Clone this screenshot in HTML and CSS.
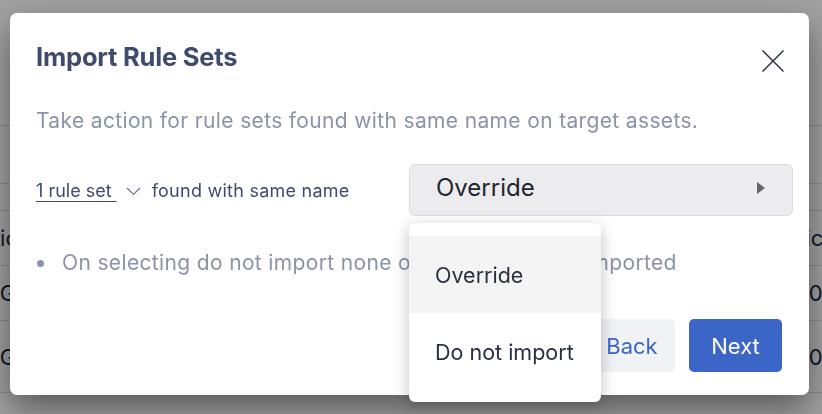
FILE: index.html
```html
<!DOCTYPE html>
<html>
<head>
<meta charset="utf-8">
<link rel="stylesheet" href="styles.css">
</head>
<body>
<div class="page">
  <div class="bg-row h1"></div>
  <div class="bg-row h2"></div>
  <div class="bg-row h4"><span class="l logic">Logic</span><span class="r shift">Policies</span></div>
  <div class="bg-row h4"><span class="l qg">QG</span><span class="r">100</span></div>
  <div class="bg-row h5"><span class="l qg">QG</span><span class="r">100</span></div>
</div>
<div class="overlay"></div>
<div class="modal">
  <div class="header">
    <h1 class="title">Import Rule Sets</h1>
    <svg class="close" width="24" height="24" viewBox="0 0 24 24"><path d="M1.5 1.5 L22.5 22.5 M22.5 1.5 L1.5 22.5" stroke="#2b3146" stroke-width="1.5" fill="none"/></svg>
  </div>
  <p class="subtitle">Take action for rule sets found with same name on target assets.</p>
  <div class="row">
    <div class="label">
      <span class="link">1 rule set </span>
      <svg class="chev" width="15" height="9" viewBox="0 0 15 9"><path d="M1 1 L7.5 7.5 L14 1" stroke="#6b7590" stroke-width="1.2" fill="none"/></svg>
      <span>found with same name</span>
    </div>
    <div class="select-wrap">
      <div class="select">
        <span>Override</span>
        <svg width="10" height="14" viewBox="0 0 10 14"><path d="M1 1 L9 7 L1 13 Z" fill="#666"/></svg>
      </div>
      <ul class="menu">
        <li class="active">Override</li>
        <li>Do not import</li>
      </ul>
    </div>
  </div>
  <ul class="notes">
    <li>On selecting do not import none of the sets will be imported</li>
  </ul>
  <div class="footer">
    <button class="btn back">Back</button>
    <button class="btn next">Next</button>
  </div>
</div>
</body>
</html>
```
FILE: styles.css
```css
html, body {
  margin: 0;
  padding: 0;
  width: 822px;
  height: 414px;
  overflow: hidden;
  font-family: "Inter", "Liberation Sans", sans-serif;
  background: #fff;
}
.page {
  padding-top: 125px;
  overflow: hidden;
}
.bg-row {
  border-top: 1px solid #d8dae0;
  display: grid;
  grid-template-columns: 786px 1fr;
  align-items: center;
  color: #1e2440;
  font-size: 22px;
  box-sizing: border-box;
  white-space: nowrap;
}
.logic { margin-left: -39px; }
.qg { margin-left: -17px; }
.shift { margin-left: -13px; }
.h1 { height: 58px; }
.h2 { height: 27px; }
.h4 { height: 55px; }
.h5 { height: 73px; border-bottom: 1px solid #d8dae0; }
.overlay {
  position: fixed;
  inset: 0;
  background: rgba(0, 0, 0, 0.37);
}
.modal {
  position: fixed;
  left: 10px;
  top: 13px;
  width: 799px;
  height: 382px;
  box-sizing: border-box;
  background: #fff;
  border-radius: 7px;
  padding: 29px 26px 0 26px;
  box-shadow: 0 14px 34px rgba(0, 0, 0, 0.45);
  display: flex;
  flex-direction: column;
}
.header {
  display: flex;
  justify-content: space-between;
  align-items: center;
  height: 30px;
}
.title {
  margin: 0;
  font-size: 25.5px;
  line-height: 30px;
  font-weight: 700;
  color: #3f4a6c;
  letter-spacing: -0.2px;
}
.close {
  margin-right: -2px;
  margin-top: 8px;
}
.subtitle {
  margin: 35px 0 0 0;
  font-size: 21px;
  line-height: 28px;
  color: #8b93aa;
  letter-spacing: 0.35px;
}
.row {
  margin-top: 29px;
  display: flex;
  align-items: center;
  justify-content: space-between;
}
.label {
  display: flex;
  align-items: center;
  font-size: 18px;
  color: #3f4a6c;
  letter-spacing: 0.25px;
}
.link {
  text-decoration: underline;
  text-underline-offset: 4px;
  text-decoration-thickness: 1px;
  white-space: pre;
  letter-spacing: 0;
}
.chev { margin: 3px 11px 0 9px; }
.select-wrap {
  position: relative;
  width: 384px;
  margin-right: -10px;
}
.select {
  height: 52px;
  box-sizing: border-box;
  background: #ececef;
  border: 1px solid #dcdde2;
  border-radius: 6px;
  display: flex;
  align-items: center;
  justify-content: space-between;
  padding: 0 26px 5px 26px;
  font-size: 24px;
  color: #222530;
}
.menu {
  position: absolute;
  left: 0;
  top: 59px;
  width: 192px;
  margin: 0;
  padding: 13px 0 12px 0;
  list-style: none;
  background: #fff;
  border-radius: 6px;
  box-shadow: 0 4px 16px rgba(0, 0, 0, 0.25);
  z-index: 2;
}
.menu li {
  height: 77px;
  display: flex;
  align-items: center;
  padding-left: 26px;
  font-size: 21.5px;
  color: #2a3042;
}
.menu li.active { background: #f4f4f5; }
.notes {
  margin: 33px 0 0 0;
  padding: 0;
  list-style: none;
  font-size: 21px;
  line-height: 28px;
  color: #8b93aa;
  letter-spacing: 0.35px;
}
.notes li {
  display: flex;
  align-items: center;
  white-space: nowrap;
}
.notes li::before {
  content: "";
  width: 7px;
  height: 7px;
  border-radius: 50%;
  background: #8b93aa;
  margin: 0 18px 0 1px;
  flex-shrink: 0;
}
.footer {
  margin-top: 42px;
  display: flex;
  justify-content: flex-end;
  gap: 14px;
  margin-right: 1px;
}
.btn {
  height: 53px;
  border: none;
  border-radius: 5px;
  font-family: inherit;
  font-size: 22px;
  padding: 0;
}
.back {
  background: #f0f2f6;
  color: #3b66c8;
  width: 86px;
}
.next {
  background: #3b66c8;
  color: #fff;
  width: 93px;
}
```
